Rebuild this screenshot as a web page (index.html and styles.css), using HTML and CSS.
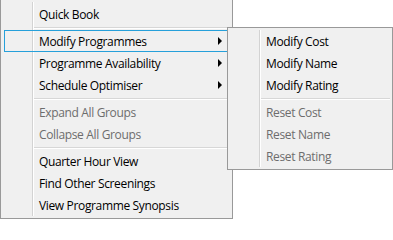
FILE: index.html
```html
<!DOCTYPE html>
<html>
<head>
<meta charset="utf-8">
<link rel="stylesheet" href="styles.css">
</head>
<body>
<div class="menu main">
  <div class="item"><span class="label">Quick Book</span></div>
  <div class="sep"></div>
  <div class="item active"><span class="label">Modify Programmes</span><span class="arrow"></span></div>
  <div class="item"><span class="label">Programme Availability</span><span class="arrow"></span></div>
  <div class="item"><span class="label">Schedule Optimiser</span><span class="arrow"></span></div>
  <div class="sep"></div>
  <div class="item disabled"><span class="label">Expand All Groups</span></div>
  <div class="item disabled"><span class="label">Collapse All Groups</span></div>
  <div class="sep"></div>
  <div class="item"><span class="label">Quarter Hour View</span></div>
  <div class="item"><span class="label">Find Other Screenings</span></div>
  <div class="item"><span class="label">View Programme Synopsis</span></div>
</div>
<div class="menu sub">
  <div class="item"><span class="label">Modify Cost</span></div>
  <div class="item"><span class="label">Modify Name</span></div>
  <div class="item"><span class="label">Modify Rating</span></div>
  <div class="sep"></div>
  <div class="item disabled"><span class="label">Reset Cost</span></div>
  <div class="item disabled"><span class="label">Reset Name</span></div>
  <div class="item disabled"><span class="label">Reset Rating</span></div>
</div>
</body>
</html>
```
FILE: styles.css
```css
html, body {
  margin: 0;
  padding: 0;
  background: #ffffff;
}
body {
  position: relative;
  width: 393px;
  height: 219px;
  overflow: hidden;
  font-family: "Open Sans", "Noto Sans", sans-serif;
  font-size: 12px;
  letter-spacing: -0.35px;
  color: #000000;
}
.menu {
  box-sizing: border-box;
  display: flex;
  flex-direction: column;
  background:
    linear-gradient(to right,
      transparent 31px, #d3d3d3 31px, #d3d3d3 32px,
      #ffffff 32px, #ffffff 33px, transparent 33px)
    no-repeat 0 2px / 100% calc(100% - 4px),
    #f0f0f0;
  background-origin: padding-box;
}
.main {
  width: 233px;
  height: 219px;
  padding: 3px 2px 2px 2px;
  border: 1px solid #999999;
  border-top: none;
}
.sub {
  position: absolute;
  left: 227px;
  top: 27px;
  width: 166px;
  height: 143px;
  padding: 2px 2px 2px 2px;
  border: 1px solid #999999;
}
.item {
  box-sizing: border-box;
  height: 22px;
  display: flex;
  align-items: center;
  padding-left: 34px;
  position: relative;
  border: 1px solid transparent;
  margin: 0 1px;
  white-space: nowrap;
}
.item .label {
  flex: 1;
  line-height: 18px;
  padding-top: 2px;
}
.item.disabled {
  color: #6d6d6d;
}
.item.active {
  border-color: #26a0da;
}
.arrow {
  width: 0;
  height: 0;
  border-top: 4px solid transparent;
  border-bottom: 4px solid transparent;
  border-left: 4px solid #000000;
  margin-right: 6px;
}
.sep {
  height: 5px;
  position: relative;
  margin-left: 31px;
}
.sep::before {
  content: "";
  position: absolute;
  left: 0;
  right: 0;
  top: 2px;
  height: 1px;
  background: #d7d7d7;
  border-bottom: 1px solid #ffffff;
}
```
